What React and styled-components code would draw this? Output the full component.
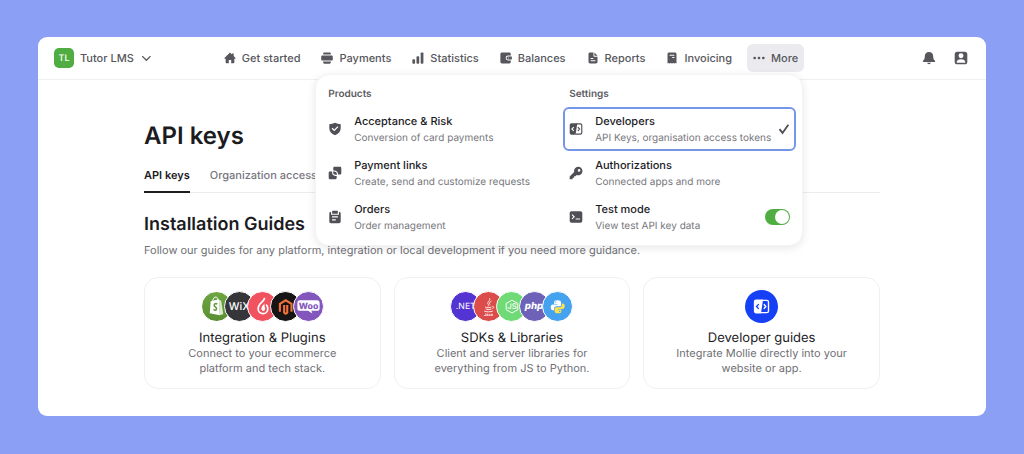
import React, { useState } from "react";
import styled, { createGlobalStyle } from "styled-components";

const GlobalStyle = createGlobalStyle`
  * {
    box-sizing: border-box;
  }

  body {
    margin: 0;
    background: #8b9ff4;
    color: #1c1c1f;
    font-family: Inter, "Liberation Sans", sans-serif;
    text-rendering: geometricPrecision;
    -webkit-font-smoothing: antialiased;
  }

  a {
    color: inherit;
    text-decoration: none;
  }

  button {
    font-family: inherit;
    text-rendering: inherit;
    border: 0;
    background: none;
    cursor: pointer;
  }

  h1, h2, h3, p {
    margin: 0;
  }
`;

const Page = styled.div`
  padding: 37px 38px;
`;

const Window = styled.div`
  background: #fff;
  border-radius: 9px;
`;

const Header = styled.header`
  display: grid;
  grid-template-columns: 1fr auto 1fr;
  align-items: center;
  height: 43px;
  padding: 0 18px 0 16px;
  border-bottom: 1px solid #f0f0f2;
  color: #56565c;
`;

const Account = styled.button`
  display: flex;
  align-items: center;
  justify-self: start;
  gap: 6px;
  padding: 0;
  color: inherit;
  font-size: 11px;
  font-weight: 500;
`;

const Avatar = styled.span`
  display: grid;
  place-items: center;
  width: 20px;
  height: 20px;
  border-radius: 5px;
  background: #50ad42;
  color: #fff;
  font-size: 9px;
  font-weight: 500;
`;

const Nav = styled.nav`
  position: relative;
  display: flex;
  gap: 9px;
`;

const NavItem = styled.a`
  display: flex;
  align-items: center;
  gap: 6px;
  height: 28px;
  padding: 0 6px;
  border-radius: 6px;
  color: #56565c;
  background: ${({ $active }) => ($active ? "#ebebef" : "transparent")};
  font-size: 11px;
  font-weight: 500;
  white-space: nowrap;
`;

const Tools = styled.div`
  display: flex;
  justify-self: end;
  gap: 18px;
`;

const IconButton = styled.button`
  display: flex;
  padding: 0;
  color: #56565c;
`;

const Menu = styled.div`
  position: absolute;
  top: 30px;
  right: 1px;
  z-index: 2;
  display: grid;
  grid-template-columns: repeat(2, minmax(0, 1fr));
  gap: 8px;
  width: 488px;
  padding: 6px;
  border: 1px solid #f4f4f6;
  border-radius: 14px;
  background: #fff;
  box-shadow: 0 2px 8px rgba(20, 20, 40, 0.1);
`;

const MenuHeading = styled.h2`
  padding: 6px;
  color: #5c5c62;
  font-size: 10px;
  line-height: 14px;
  font-weight: 600;
`;

const MenuRow = styled.a`
  display: flex;
  align-items: center;
  gap: 12px;
  height: 44px;
  padding: 0 4px;
  border: 2px solid ${({ $selected }) => ($selected ? "#7596e8" : "transparent")};
  border-radius: 6px;
  color: #4f4f55;

  svg {
    flex-shrink: 0;
  }
`;

const MenuText = styled.span`
  flex: 1;
  display: block;
  min-width: 0;
  white-space: nowrap;
`;

const MenuTitle = styled.span`
  display: block;
  color: #1c1c1f;
  font-size: 11px;
  line-height: 18px;
  font-weight: 500;
`;

const MenuNote = styled.span`
  display: block;
  color: #77777d;
  font-size: 10px;
  line-height: 16px;
`;

const Switch = styled.input`
  appearance: none;
  display: flex;
  width: 25px;
  height: 16px;
  margin: 0;
  padding: 1px;
  border-radius: 8px;
  background: ${({ checked }) => (checked ? "#50ad42" : "#c4c4ca")};
  justify-content: ${({ checked }) => (checked ? "flex-end" : "flex-start")};
  cursor: pointer;

  &::before {
    content: "";
    width: 14px;
    height: 14px;
    border-radius: 50%;
    background: #fff;
  }
`;

const Main = styled.main`
  padding: 41px 106px 27px;
`;

const Title = styled.h1`
  font-size: 24px;
  line-height: 30px;
  font-weight: 600;
`;

const Tabs = styled.nav`
  display: flex;
  gap: 20px;
  margin-top: 13px;
  border-bottom: 1px solid #ececef;
`;

const Tab = styled.a`
  height: 29px;
  margin-bottom: -1px;
  border-bottom: 2px solid ${({ $active }) => ($active ? "#1c1c1f" : "transparent")};
  color: ${({ $active }) => ($active ? "#1c1c1f" : "#77777d")};
  font-size: 11px;
  line-height: 22px;
  font-weight: ${({ $active }) => ($active ? 600 : 500)};
`;

const SectionTitle = styled.h2`
  margin-top: 20px;
  font-size: 18px;
  line-height: 24px;
  font-weight: 600;
`;

const Lead = styled.p`
  margin-top: 5px;
  color: #707076;
  font-size: 11px;
  line-height: 16px;
`;

const Cards = styled.div`
  display: grid;
  grid-template-columns: repeat(3, 1fr);
  gap: 13px;
  margin-top: 19px;
`;

const Card = styled.a`
  display: flex;
  flex-direction: column;
  align-items: center;
  padding: 12px 24px;
  border: 1px solid #f0f0f2;
  border-radius: 14px;
  text-align: center;
`;

const CardTitle = styled.h3`
  margin-top: 7px;
  font-size: 13px;
  line-height: 16px;
  font-weight: 400;
`;

const CardText = styled.p`
  max-width: 184px;
  color: #707076;
  font-size: 11px;
  line-height: 15px;
`;

const Logos = styled.div`
  display: flex;
  align-items: center;
  height: 33px;
`;

const Logo = styled.svg`
  width: 31px;
  height: 31px;
  border: 1px solid #fff;
  border-radius: 50%;
  background: ${({ $bg }) => $bg};

  & + & {
    margin-left: -8px;
  }
`;

const GuideBadge = styled.span`
  display: grid;
  place-items: center;
  width: 33px;
  height: 33px;
  border-radius: 50%;
  background: #1540f5;
  color: #fff;
`;

const icons = {
  home: (
    <path d="M8 .8.9 7.600c-.6.600-.3 1.500.6 1.500h.7V14c0 .6.4 1 1 1h3.200v-4.200h3.200V15h3.200c.6 0 1-.4 1-1V9.100h.7c.9 0 1.200-.9.6-1.500l-2.200-2.200V2h-2.200v1.300z" />
  ),
  payments: (
    <path d="M4.500.5h7c1 0 1.600.7 1.600 1.500v1.400H2.900V2C2.900 1.200 3.500.5 4.500.5zM1.800 4.600h12.400c.9 0 1.500.6 1.500 1.500v3.800c0 .9-.6 1.500-1.500 1.500H1.800c-.9 0-1.500-.6-1.500-1.500V6.100c0-.9.6-1.500 1.500-1.500zM2.900 12.600h10.200V14c0 .8-.6 1.500-1.600 1.500h-7c-1 0-1.600-.7-1.600-1.500z" />
  ),
  stats: (
    <>
      <rect x=".5" y="9.500" width="3.600" height="6" rx="1.200" />
      <rect x="6" y="5.500" width="3.600" height="10" rx="1.200" />
      <rect x="11.600" y=".5" width="3.600" height="15" rx="1.200" />
    </>
  ),
  wallet: (
    <path d="M2.700.7h9.800c1.100 0 1.900.8 1.900 1.900v2.200h-3.700a3.200 3.200 0 0 0 0 6.400h3.700v2.200c0 1.100-.8 1.900-1.900 1.900H2.700c-1.300 0-2.200-.9-2.200-2.200V2.900C.5 1.600 1.400.7 2.700.7zM10.700 6h5.100v4h-5.100a2 2 0 0 1 0-4zm.4 1.300a.7.7 0 1 0 0 1.400.7.7 0 0 0 0-1.400z" />
  ),
  report: (
    <path d="M4 .7h4.600v4.700c0 .6.4 1 1 1H14v6.700c0 1.300-.9 2.200-2.200 2.200H4.200C2.900 15.300 2 14.400 2 13.100V2.900C2 1.600 2.800.7 4 .7zm5.900 0L14 5.100H9.900zM4.800 8.100v1.300h3.700V8.100zm0 3v1.300h6.400v-1.300z" />
  ),
  invoice: (
    <path d="M4.200.7h7.600c1.300 0 2.200.9 2.200 2.200v12.500l-1.500-.6-1.500.6-1.500-.6-1.500.6-1.500-.6-1.500.6-1.500-.6-1.500.6V2.900C2 1.600 2.900.7 4.200.7zm.6 2.900v1.300h6.400V3.600zm3.500 3.200v1.300h2.900V6.800z" />
  ),
  more: (
    <>
      <circle cx="2.200" cy="8" r="1.800" />
      <circle cx="8" cy="8" r="1.800" />
      <circle cx="13.800" cy="8" r="1.800" />
    </>
  ),
  bell: (
    <path d="M8 1c3 0 4.800 2.100 4.800 4.900 0 3 .7 3.900 2 5.100.6.600.3 1.500-.6 1.500H1.800c-.9 0-1.200-.9-.6-1.500 1.300-1.200 2-2.100 2-5.100C3.200 3.100 5 1 8 1zM5.800 13.500h4.400c-.3 1-1.100 1.600-2.200 1.600s-1.900-.6-2.200-1.600z" />
  ),
  user: (
    <path d="M3.500.8h9c1.600 0 2.700 1.100 2.700 2.700v9c0 1.600-1.100 2.700-2.700 2.700h-9C1.900 15.200.8 14.100.8 12.500v-9C.8 1.900 1.900.8 3.500.8zM8 2.600a2.800 2.800 0 1 0 0 5.600 2.800 2.800 0 0 0 0-5.600zM3 13.400h10c0-2.700-2-4-5-4s-5 1.300-5 4z" />
  ),
  shield: (
    <path d="M8 .8c2 1 4.200 1.500 6.500 1.700v4.700c0 3.800-2.500 6.500-6.500 8-4-1.500-6.500-4.200-6.500-8V2.500C3.800 2.300 6 1.800 8 .8zM5.200 6.600 4.100 7.700l3.100 3 4.700-4.900-1.100-1-3.600 3.800z" />
  ),
  link: (
    <path d="M7.500.8h6.300c.8 0 1.400.6 1.400 1.400v6c0 .8-.6 1.400-1.400 1.400h-2.200c0-2.900-2-4.600-4.600-4.600H6V2.200C6 1.400 6.700.8 7.500.8zM2.200 6.300h2.500v1.500c0 2.200 1.600 3.500 3.500 3.500h1.700v2.500c0 .8-.6 1.400-1.400 1.400H2.200c-.8 0-1.400-.6-1.400-1.400V7.700c0-.8.6-1.400 1.400-1.400zM5.900 6.300H7c1.900 0 3.200 1.200 3.200 3.100v.7h-1.500C7 10.100 5.900 9.100 5.900 7.500z" />
  ),
  orders: (
    <path d="M4.800.8h6.400v3.400H4.800zM3.500 1.900v3.500h9V1.900c1.300.1 2 .9 2 2.100v9.200c0 1.200-.8 2-2 2h-9c-1.200 0-2-.8-2-2V4c0-1.200.7-2 2-2.100zM4.600 7.200v1.300h6.800V7.200zm0 3.400v1.300h4.300v-1.300z" />
  ),
  code: (
    <>
      <path d="M3 1.500h6.500l-2 13H3c-1.400 0-2.200-.8-2.200-2.200V3.700C.8 2.300 1.600 1.500 3 1.500zm2 3.800L2.400 8 5 10.700l.9-.9L4.200 8l1.700-1.800z" />
      <path
        d="M8.500 2.200H13c1 0 1.600.6 1.600 1.600v8.400c0 1-.6 1.600-1.600 1.600H7.500M10.200 5.900 12.100 8l-1.900 2.100"
        fill="none"
        stroke="currentColor"
        strokeWidth="1.300"
      />
    </>
  ),
  key: (
    <path d="M10.300.8a4.900 4.900 0 1 1-1.500 9.500l-1.400 1.400H5.800v1.700H4.100v1.700H.8v-3.200l5.100-5.100A4.900 4.900 0 0 1 10.300.8zm1.200 2.700a1.500 1.500 0 1 0 0 3 1.500 1.500 0 0 0 0-3z" />
  ),
  terminal: (
    <path d="M3 1.500h10c1.400 0 2.200.8 2.200 2.200v8.600c0 1.400-.8 2.200-2.200 2.200H3c-1.400 0-2.200-.8-2.200-2.200V3.700C.8 2.300 1.600 1.500 3 1.500zm.9 3.400L3 5.800l2 2-2 2 .9.900 2.900-2.900zM7.600 9.600v1.300h5V9.600z" />
  ),
  check: (
    <path d="m2 8.200 4 5L13.800 2.300" fill="none" stroke="currentColor" strokeWidth="2.400" />
  ),
  chevron: (
    <path d="m3 5.500 5.500 5.500L14 5.500" fill="none" stroke="currentColor" strokeWidth="1.700" />
  ),
};

function Icon({ name, size = 12 }) {
  return (
    <svg
      width={size}
      height={size}
      viewBox="0 0 16 16"
      fill="currentColor"
      fillRule="evenodd"
      aria-hidden="true"
    >
      {icons[name]}
    </svg>
  );
}

const plugins = [
  {
    bg: "linear-gradient(#6ea643, #588f32)",
    art: (
      <>
        <path d="m9 9.500 8.500-2L18.500 24 8 22z" fill="#fff" />
        <path d="m17.500 8 2.300 1L22 22.700 18.500 24z" fill="#dcebd0" />
        <path d="M11 9.500c.5-3 2-4.500 3.500-4.300 1.300.2 2 1.500 2 3.300" fill="none" stroke="#fff" />
        <path
          d="M15.800 12.400c-1.400-.8-3.200-.3-3.200 1.200 0 1.800 2.500 1.700 2.500 3.700 0 1.600-1.900 1.900-3.300.8"
          fill="none"
          stroke="#62993a"
          strokeWidth="1.600"
        />
      </>
    ),
  },
  {
    bg: "#36363a",
    art: (
      <text x="4" y="19" fill="#fff" fontSize="11" fontWeight="500">
        WiX
      </text>
    ),
  },
  {
    bg: "#f0525f",
    art: (
      <>
        <path
          d="M17 6c.5 3.500-6.500 5.500-6.500 11 0 3.200 2.200 5.400 5 5.400s5-2.200 5-5.200c0-1.800-.7-3.200-1.800-4.200"
          fill="none"
          stroke="#fff"
          strokeWidth="1.800"
        />
        <path d="M17.500 10.500c0 2.200-3.700 3.500-3.700 6.500 0 1.700 1 2.600 2 2.600s2-.9 2-2.200c0-2-1.500-2.700-.3-6.900z" fill="#fff" />
      </>
    ),
  },
  {
    bg: "#161414",
    art: (
      <path
        d="M9.200 20.500v-8.300l6-3.600 6 3.600v8.300M13.600 13.500v8l1.600 1 1.600-1v-8"
        fill="none"
        stroke="#f07038"
        strokeWidth="2.200"
      />
    ),
  },
  {
    bg: "#8356bd",
    art: (
      <>
        <path d="M6 8.500h18c1.500 0 2.500 1 2.500 2.500v6c0 1.500-1 2.500-2.500 2.500h-6l1 2.800-4.500-2.800H6c-1.500 0-2.500-1-2.500-2.500v-6c0-1.500 1-2.500 2.500-2.500z" fill="#fff" />
        <text x="15" y="17.500" fill="#8356bd" fontSize="9" fontWeight="800" textAnchor="middle">
          Woo
        </text>
      </>
    ),
  },
];

const sdks = [
  {
    bg: "#5433d3",
    art: (
      <text x="5" y="18" fill="#fff" fontSize="9">
        .NET
      </text>
    ),
  },
  {
    bg: "#dc4c4a",
    art: (
      <>
        <path
          d="M16 6.500c2 2.500-3.500 3.500-1.200 6.500.7 1 .2 1.500-.3 2M18 9.500c-2 1-2.500 2-1.500 3.500M11.500 15.500c1.500 1 5 1 6.500 0M12 17.500c1.500.9 4.500.9 6 0M10.500 19.700c2 1.100 7 1.100 9 0M19 15c2-.3 1.700 1.800 0 2.200"
          fill="none"
          stroke="#fff"
          strokeWidth="0.900"
        />
        <text x="15" y="24.500" fill="#fff" fontSize="4" fontWeight="600" textAnchor="middle">
          Java
        </text>
      </>
    ),
  },
  {
    bg: "#70db76",
    art: (
      <>
        <path d="m15.500 8.500 6 3.300v6.600l-6 3.300-6-3.300v-6.600z" fill="none" stroke="#fff" />
        <text x="15.500" y="18" fill="#fff" fontSize="8" fontWeight="500" textAnchor="middle">
          JS
        </text>
      </>
    ),
  },
  {
    bg: "#6d62b7",
    art: (
      <text x="14.500" y="18" fill="#fff" fontSize="10" fontWeight="800" fontStyle="italic" textAnchor="middle">
        php
      </text>
    ),
  },
  {
    bg: "#45a2ef",
    art: (
      <>
        <path
          d="M15 8.500c-2.600 0-3.500.8-3.500 2.200v1.600H15v.7h-4.500c-1.800 0-2.500 1.400-2.500 3s.7 2.800 2.200 2.800h1.300v-1.900c0-1.300 1-2.100 2.200-2.100H17c1 0 1.700-.7 1.700-1.700v-2.400c0-1.400-1.200-2.200-3.700-2.200zM13.200 9.700a.7.7 0 1 1 0 1.400.7.7 0 0 1 0-1.400z"
          fill="#fff"
        />
        <path
          d="M15.500 22c2.600 0 3.500-.8 3.500-2.200v-1.600h-3.500v-.7H20c1.800 0 2.500-1.400 2.500-3s-.7-2.700-2.200-2.700h-.9v1.800c0 1.300-1 2.100-2.200 2.100h-3.500c-1 0-1.700.7-1.700 1.700v2.400c0 1.400 1.200 2.200 3.500 2.200zm1.800-2.600a.7.7 0 1 1 0 1.400.7.7 0 0 1 0-1.400z"
          fill="#ffe14d"
        />
      </>
    ),
  },
];

const navItems = [
  ["home", "Get started"],
  ["payments", "Payments"],
  ["stats", "Statistics"],
  ["wallet", "Balances"],
  ["report", "Reports"],
  ["invoice", "Invoicing"],
];

const products = [
  ["shield", "Acceptance & Risk", "Conversion of card payments"],
  ["link", "Payment links", "Create, send and customize requests"],
  ["orders", "Orders", "Order management"],
];

function MenuEntry({ icon, title, note, selected, children, ...rest }) {
  return (
    <MenuRow $selected={selected} {...rest}>
      <Icon name={icon} size={14} />
      <MenuText>
        <MenuTitle>{title}</MenuTitle>
        <MenuNote>{note}</MenuNote>
      </MenuText>
      {children}
    </MenuRow>
  );
}

function LogoStack({ items }) {
  return (
    <Logos>
      {items.map(({ bg, art }) => (
        <Logo key={bg} $bg={bg} viewBox="0 0 30 30" aria-hidden="true">
          {art}
        </Logo>
      ))}
    </Logos>
  );
}

export default function App() {
  const [open, setOpen] = useState(true);
  const [testMode, setTestMode] = useState(true);

  return (
    <>
      <GlobalStyle />
      <Page>
        <Window>
          <Header>
            <Account>
              <Avatar>TL</Avatar>
              Tutor LMS
              <Icon name="chevron" />
            </Account>

            <Nav>
              {navItems.map(([icon, label]) => (
                <NavItem key={label} href="#">
                  <Icon name={icon} />
                  {label}
                </NavItem>
              ))}
              <NavItem
                as="button"
                $active={open}
                aria-expanded={open}
                onClick={() => setOpen(!open)}
              >
                <Icon name="more" />
                More
              </NavItem>

              {open && (
                <Menu>
                  <div>
                    <MenuHeading>Products</MenuHeading>
                    {products.map(([icon, title, note]) => (
                      <MenuEntry key={title} href="#" icon={icon} title={title} note={note} />
                    ))}
                  </div>
                  <div>
                    <MenuHeading>Settings</MenuHeading>
                    <MenuEntry
                      href="#"
                      icon="code"
                      title="Developers"
                      note="API Keys, organisation access tokens"
                      selected
                    >
                      <Icon name="check" />
                    </MenuEntry>
                    <MenuEntry
                      href="#"
                      icon="key"
                      title="Authorizations"
                      note="Connected apps and more"
                    />
                    <MenuEntry
                      as="label"
                      htmlFor="test-mode"
                      icon="terminal"
                      title="Test mode"
                      note="View test API key data"
                    >
                      <Switch
                        id="test-mode"
                        type="checkbox"
                        role="switch"
                        checked={testMode}
                        onChange={() => setTestMode(!testMode)}
                      />
                    </MenuEntry>
                  </div>
                </Menu>
              )}
            </Nav>

            <Tools>
              <IconButton aria-label="Notifications">
                <Icon name="bell" size={14} />
              </IconButton>
              <IconButton aria-label="Profile">
                <Icon name="user" size={14} />
              </IconButton>
            </Tools>
          </Header>

          <Main>
            <Title>API keys</Title>
            <Tabs>
              <Tab href="#" $active>
                API keys
              </Tab>
              <Tab href="#">Organization access tokens</Tab>
            </Tabs>

            <SectionTitle>Installation Guides</SectionTitle>
            <Lead>
              Follow our guides for any platform, integration or local development if you need
              more guidance.
            </Lead>

            <Cards>
              <Card href="#">
                <LogoStack items={plugins} />
                <CardTitle>Integration &amp; Plugins</CardTitle>
                <CardText>Connect to your ecommerce platform and tech stack.</CardText>
              </Card>
              <Card href="#">
                <LogoStack items={sdks} />
                <CardTitle>SDKs &amp; Libraries</CardTitle>
                <CardText>Client and server libraries for everything from JS to Python.</CardText>
              </Card>
              <Card href="#">
                <GuideBadge>
                  <Icon name="code" size={17} />
                </GuideBadge>
                <CardTitle>Developer guides</CardTitle>
                <CardText>Integrate Mollie directly into your website or app.</CardText>
              </Card>
            </Cards>
          </Main>
        </Window>
      </Page>
    </>
  );
}
